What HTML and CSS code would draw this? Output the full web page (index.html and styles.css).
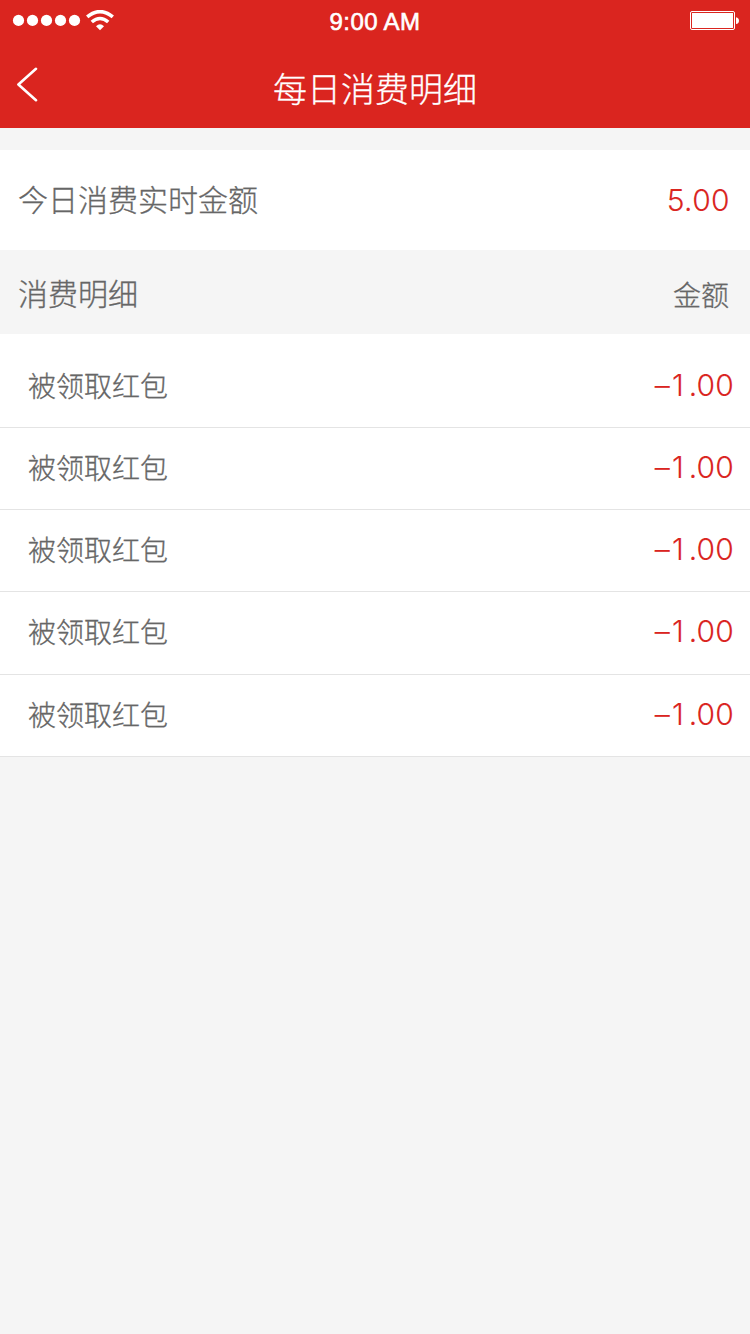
FILE: index.html
```html
<!DOCTYPE html>
<html lang="zh-CN">
<head>
<meta charset="utf-8">
<title>每日消费明细</title>
<link rel="stylesheet" href="styles.css">
</head>
<body>
<header class="header">
  <div class="status">
    <div class="signal">
      <svg class="dots" width="70" height="12" viewBox="0 0 70 12" fill="#fff"><circle cx="6.5" cy="6.4" r="5.6"/><circle cx="20.5" cy="6.4" r="5.6"/><circle cx="34.5" cy="6.4" r="5.6"/><circle cx="48.5" cy="6.4" r="5.6"/><circle cx="62.5" cy="6.4" r="5.6"/></svg>
      <svg class="wifi" width="28" height="21" viewBox="0 0 28 21" fill="none" stroke="#fff" stroke-width="3.6"><path d="M1.2 6.9Q14 -3.6 26.8 6.9"/><path d="M5.8 12Q14 5 22.2 12"/><path d="M10 16.2Q14 12.4 18 16.2L14 20.2Z" fill="#fff" stroke="none"/></svg>
    </div>
    <div class="clock">9:00 AM</div>
    <svg class="battery" width="50" height="20" viewBox="0 0 50 20"><rect x=".5" y=".5" width="44" height="18" rx="1.5" fill="none" stroke="#fff"/><rect x="2" y="2" width="41" height="15" fill="#fff"/><path d="M46 6.3Q49 7 49 9.7Q49 12.4 46 13.1Z" fill="#fff"/></svg>
  </div>
  <nav class="nav">
    <svg class="back" width="24" height="36" viewBox="0 0 24 36" fill="none" stroke="#fff" stroke-width="2.6" stroke-linecap="round" stroke-linejoin="round"><path d="M20 1.8L2.4 17.5L20 33.2"/></svg>
    <h1 class="title">每日消费明细</h1>
  </nav>
</header>
<main>
  <section class="summary"><span>今日消费实时金额</span><span class="total">5.00</span></section>
  <div class="heading"><span>消费明细</span><span class="heading-amount">金额</span></div>
  <ul class="list">
    <li class="row"><span>被领取红包</span><span class="amount">–<span class="units">1</span>.00</span></li>
    <li class="row"><span>被领取红包</span><span class="amount">–<span class="units">1</span>.00</span></li>
    <li class="row"><span>被领取红包</span><span class="amount">–<span class="units">1</span>.00</span></li>
    <li class="row"><span>被领取红包</span><span class="amount">–<span class="units">1</span>.00</span></li>
    <li class="row"><span>被领取红包</span><span class="amount">–<span class="units">1</span>.00</span></li>
  </ul>
</main>
</body>
</html>
```
FILE: styles.css
```css
* { box-sizing: border-box; }
body {
  margin: 0;
  min-height: 1334px;
  background: #f5f5f5;
  color: #666;
  font-family: "Noto Sans CJK SC", sans-serif;
  font-weight: 300;
  -webkit-text-stroke: 0.3px currentColor;
}
svg { display: block; }
.header { height: 128px; background: #da251f; color: #fff; }
.status {
  display: grid;
  grid-template-columns: 1fr auto 1fr;
  align-items: center;
  height: 41px;
  padding: 0 10px 0 12px;
}
.signal { display: flex; align-items: center; gap: 4px; }
.dots { margin-top: -1px; }
.wifi { margin-top: -1px; }
.clock {
  font: 400 24px/28px "Liberation Sans", sans-serif;
  letter-spacing: 0.4px;
  padding: 2px 2px 0 0;
  -webkit-text-stroke-width: 0.6px;
}
.battery { justify-self: end; margin-top: 1px; }
.nav {
  display: grid;
  grid-template-columns: 60px 1fr 60px;
  height: 87px;
  padding-top: 26px;
}
.back { margin-left: 16px; }
.title {
  margin: 0;
  padding-top: 1px;
  font-size: 34px;
  line-height: 40px;
  font-weight: 300;
  text-align: center;
}
.summary, .heading, .row {
  display: flex;
  align-items: center;
  justify-content: space-between;
}
.summary {
  height: 100px;
  margin-top: 22px;
  padding: 0 20px 4px 18px;
  background: #fff;
  font-size: 30px;
}
.heading { height: 84px; padding: 0 21px 0 18px; font-size: 30px; }
.heading-amount { font-size: 28px; padding-top: 3px; }
.total, .amount {
  color: #da251f;
  font-family: Inter, sans-serif;
  font-size: 30px;
  font-feature-settings: "calt" 0;
  letter-spacing: 0.2px;
  -webkit-text-stroke-width: 0.1px;
}
.total { padding-top: 3px; letter-spacing: 0.4px; }
.units { margin: 0 4.6px 0 2.2px; }
.list { margin: 0; padding: 11.8px 0 0; list-style: none; background: #fff; }
.row {
  height: 82.2px;
  padding: 0 16px 3px 28px;
  border-bottom: 1px solid #e4e4e4;
  font-size: 28px;
}
```
